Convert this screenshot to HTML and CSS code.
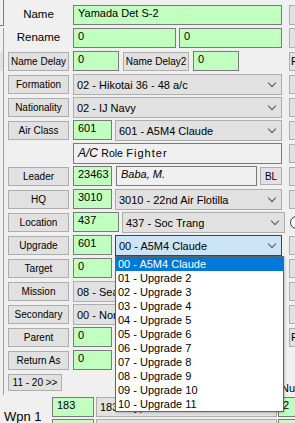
FILE: index.html
```html
<!DOCTYPE html>
<html lang="en">
<head>
  <meta charset="UTF-8">
  <title>Air Group Editor</title>
  <link rel="stylesheet" href="styles.css">
</head>
<body>
  <div class="frame">
    <div class="edge">
      <div class="edge-top"></div>
      <div class="edge-line"><div class="edge-btn"></div></div>
    </div>

    <div class="form">
      <div class="row">
        <div class="cap label">Name</div>
        <div class="main"><div class="box green full">Yamada Det S-2</div></div>
        <div class="side"><div class="side-btn tall"></div></div>
      </div>
      <div class="row">
        <div class="cap label">Rename</div>
        <div class="main">
          <div class="box green w103">0</div>
          <div class="box green w103">0</div>
        </div>
        <div class="side"><div class="side-btn tall"></div></div>
      </div>
      <div class="row">
        <div class="cap"><div class="btn">Name Delay</div></div>
        <div class="main gap4">
          <div class="box green w46">0</div>
          <div class="btn w66">Name Delay2</div>
          <div class="box green w46">0</div>
        </div>
        <div class="side"><div class="side-btn letter">F</div></div>
      </div>
      <div class="row">
        <div class="cap"><div class="btn">Formation</div></div>
        <div class="main"><div class="combo full">02 - Hikotai 36 - 48 a/c</div></div>
        <div class="side"><div class="side-btn"></div></div>
      </div>
      <div class="row">
        <div class="cap"><div class="btn">Nationality</div></div>
        <div class="main"><div class="combo full">02 - IJ Navy</div></div>
        <div class="side"><div class="side-btn"></div></div>
      </div>
      <div class="row">
        <div class="cap"><div class="btn">Air Class</div></div>
        <div class="main">
          <div class="box green w39">601</div>
          <div class="combo w167">601 - A5M4 Claude</div>
        </div>
        <div class="side"><div class="side-btn"></div></div>
      </div>
      <div class="row">
        <div class="cap"></div>
        <div class="main">
          <div class="box plain full role"><i>A/C</i> <span class="role-key">Role</span> <span class="role-val">Fighter</span></div>
        </div>
        <div class="side"><div class="side-btn"></div></div>
      </div>
      <div class="row">
        <div class="cap"><div class="btn">Leader</div></div>
        <div class="main">
          <div class="box green w39">23463</div>
          <div class="box plain w141 gap1"><i>Baba, M.</i></div>
          <div class="btn w22 bl">BL</div>
        </div>
        <div class="side"><div class="side-btn"></div></div>
      </div>
      <div class="row">
        <div class="cap"><div class="btn">HQ</div></div>
        <div class="main">
          <div class="box green w39">3010</div>
          <div class="combo w167">3010 - 22nd Air Flotilla</div>
        </div>
        <div class="side"><div class="side-btn"></div></div>
      </div>
      <div class="row">
        <div class="cap"><div class="btn">Location</div></div>
        <div class="main">
          <div class="box green w46">437</div>
          <div class="combo w163">437 - Soc Trang</div>
        </div>
        <div class="side"><div class="radio"></div></div>
      </div>
      <div class="row">
        <div class="cap"><div class="btn">Upgrade</div></div>
        <div class="main">
          <div class="box green w39">601</div>
          <div class="combo w167 open">00 - A5M4 Claude</div>
        </div>
        <div class="side"><div class="side-btn"></div></div>
      </div>
      <div class="row">
        <div class="cap"><div class="btn">Target</div></div>
        <div class="main">
          <div class="box green w39">0</div>
          <div class="combo w167">0 - None</div>
        </div>
        <div class="side"><div class="side-btn"></div></div>
      </div>
      <div class="row">
        <div class="cap"><div class="btn">Mission</div></div>
        <div class="main"><div class="combo full">08 - Search</div></div>
        <div class="side"><div class="side-btn"></div></div>
      </div>
      <div class="row">
        <div class="cap"><div class="btn">Secondary</div></div>
        <div class="main"><div class="combo full">00 - None</div></div>
        <div class="side"><div class="side-btn"></div></div>
      </div>
      <div class="row">
        <div class="cap"><div class="btn">Parent</div></div>
        <div class="main"><div class="box green w39">0</div></div>
        <div class="side"><div class="side-btn letter">F</div></div>
      </div>
      <div class="row">
        <div class="cap"><div class="btn">Return As</div></div>
        <div class="main"><div class="box green w39">0</div></div>
      </div>
      <div class="row pager">
        <div class="cap"><div class="btn w54 short">11 - 20 &gt;&gt;</div></div>
        <div class="main"></div>
        <div class="num-head">Num</div>
      </div>
    </div>
  </div>

  <div class="wpn">
    <div class="wpn-lbl">Wpn 1</div>
    <div><div class="box green w42">183</div></div>
    <div><div class="combo w181">183 - Type 99 Mk1 20mm</div></div>
    <div><div class="box green wide">2</div></div>

    <div class="wpn-lbl">Wpn 2</div>
    <div><div class="box green w42">0</div></div>
    <div><div class="combo w181">0 - None</div></div>
    <div><div class="box green wide">0</div></div>
  </div>

  <div class="list">
    <div class="sel">00 - A5M4 Claude</div>
    <div>01 - Upgrade 2</div>
    <div>02 - Upgrade 3</div>
    <div>03 - Upgrade 4</div>
    <div>04 - Upgrade 5</div>
    <div>05 - Upgrade 6</div>
    <div>06 - Upgrade 7</div>
    <div>07 - Upgrade 8</div>
    <div>08 - Upgrade 9</div>
    <div>09 - Upgrade 10</div>
    <div>10 - Upgrade 11</div>
  </div>
</body>
</html>
```

FILE: styles.css
```css
* {
  box-sizing: border-box;
}

html, body {
  margin: 0;
}

body {
  position: relative;
  width: 295px;
  height: 423px;
  overflow: hidden;
  background: #f0f0f0;
  font-family: "Liberation Sans", Arial, sans-serif;
  font-size: 11px;
  color: #000;
}

/* left edge of the neighbouring panel */
.frame {
  display: flex;
}

.edge {
  width: 4px;
  flex-shrink: 0;
}

.edge-top {
  height: 26px;
  border-right: 1px solid #7a7a7a;
  border-bottom: 1px solid #7a7a7a;
}

.edge-line {
  margin-top: 2px;
  padding-top: 24px;
  height: 367px;
  border-right: 1px solid #a0a0a0;
}

.edge-btn {
  height: 19px;
  background: #e1e1e1;
}

.form {
  margin-left: 4px;
  padding-top: 5px;
}

.row {
  display: flex;
  height: 20px;
  margin-bottom: 3px;
}

.row.pager {
  height: 24px;
  margin-bottom: 0;
}

.cap {
  width: 61px;
  flex-shrink: 0;
  margin-right: 4px;
}

.label {
  text-align: center;
  line-height: 18px;
  font-size: 11.5px;
}

.main {
  width: 209px;
  flex-shrink: 0;
  display: flex;
  gap: 3px;
}

.main.gap4 {
  gap: 4px;
}

.side {
  margin-left: 7px;
  width: 24px;
  flex-shrink: 0;
}

/* text boxes */
.box {
  flex-shrink: 0;
  height: 20px;
  border: 1px solid #7a7a7a;
  padding: 1px 0 0 4px;
  line-height: 13px;
  white-space: nowrap;
  overflow: hidden;
}

.green {
  background: #c0ffc0;
}

.plain {
  background: #f0f0f0;
}

.role {
  height: 21px;
  font-size: 12px;
  line-height: 15px;
  padding-top: 2px;
}

.role-key {
  font-size: 10.5px;
}

.role-val {
  font-size: 11px;
  letter-spacing: 1px;
}

.gap1 {
  margin-left: 1px;
}

/* buttons */
.btn {
  flex-shrink: 0;
  height: 19px;
  margin-top: 1px;
  background: #e1e1e1;
  border: 1px solid #adadad;
  font-size: 10px;
  display: flex;
  align-items: center;
  justify-content: center;
  white-space: nowrap;
}

.btn.short {
  height: 17px;
}

.btn.bl {
  height: 18px;
  font-size: 10px;
}

/* drop-down lists */
.combo {
  flex-shrink: 0;
  height: 21px;
  border: 1px solid #adadad;
  background: #e1e1e1;
  padding-left: 3px;
  display: flex;
  align-items: center;
  justify-content: space-between;
  white-space: nowrap;
  overflow: hidden;
}

.combo::after {
  content: "";
  flex-shrink: 0;
  width: 5px;
  height: 5px;
  margin: -4px 6px 0 6px;
  border-right: 1px solid #555;
  border-bottom: 1px solid #555;
  transform: rotate(45deg);
}

.combo.open {
  background: #cce4f7;
  border-color: #005499;
}

.side-btn {
  height: 19px;
  margin-top: 1px;
  background: #e1e1e1;
  border: 1px solid #adadad;
}

.side-btn.tall {
  height: 20px;
  margin-top: 0;
}

.side-btn.letter {
  padding-left: 1px;
  line-height: 16px;
}

.radio {
  width: 13px;
  height: 13px;
  margin: 4px 0 0 1px;
  border: 1px solid #333;
  border-radius: 50%;
  background: #fff;
}

.num-head {
  margin: 9px 0 0 -1px;
  line-height: 13px;
}

.full { width: 209px; }
.w22 { width: 22px; }
.w39 { width: 39px; }
.w42 { width: 42px; }
.w46 { width: 46px; }
.w54 { width: 54px; }
.w66 { width: 66px; }
.w103 { width: 103px; }
.w141 { width: 141px; }
.w163 { width: 163px; }
.w167 { width: 167px; }
.w181 { width: 181px; }
.wide { width: 40px; }

/* weapon rows */
.wpn {
  display: grid;
  grid-template-columns: 52px 44px 182px 40px;
  grid-auto-rows: 22px;
}

.wpn .combo {
  height: 20px;
}

.wpn-lbl {
  font-size: 13px;
  line-height: 15px;
  padding: 12px 0 0 4px;
  white-space: nowrap;
}

/* open list of the Upgrade box */
.list {
  position: absolute;
  left: 115px;
  top: 256px;
  width: 169px;
  border: 1px solid #646464;
  background: #fff;
  z-index: 5;
  box-shadow: 1px 1px 2px rgba(0, 0, 0, 0.2);
}

.list div {
  height: 14px;
  line-height: 14px;
  padding-left: 2px;
  white-space: nowrap;
}

.list .sel {
  background: #0078d7;
  color: #fff;
}
```
